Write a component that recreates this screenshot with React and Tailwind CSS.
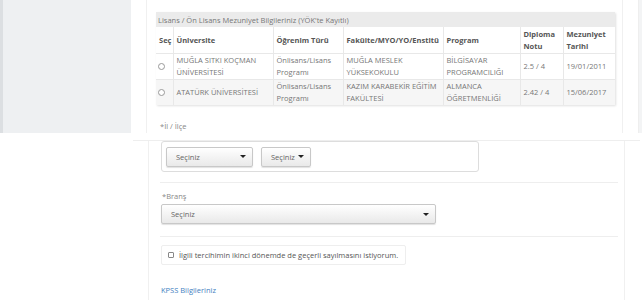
import React from 'react'

const COLS = [
  { label: 'Seç', w: 'w-[17px]' },
  { label: 'Üniversite', w: 'w-[100px]' },
  { label: 'Öğrenim Türü', w: 'w-[70px]' },
  { label: 'Fakülte/MYO/YO/Enstitü', w: 'w-[100px]' },
  { label: 'Program', w: 'w-[77px]' },
  { label: ['Diploma', 'Notu'], w: 'w-[43px]' },
  { label: ['Mezuniyet', 'Tarihi'], w: 'w-[52px]' },
]

const ROWS = [
  {
    uni: ['MUĞLA SITKI KOÇMAN', 'ÜNİVERSİTESİ'],
    tur: ['Önlisans/Lisans', 'Programı'],
    fak: ['MUĞLA MESLEK', 'YÜKSEKOKULU'],
    prog: ['BİLGİSAYAR', 'PROGRAMCILIĞI'],
    not: '2.5 / 4',
    tarih: '19/01/2011',
  },
  {
    uni: ['ATATÜRK ÜNİVERSİTESİ'],
    tur: ['Önlisans/Lisans', 'Programı'],
    fak: ['KAZIM KARABEKİR EĞİTİM', 'FAKÜLTESİ'],
    prog: ['ALMANCA', 'ÖĞRETMENLİĞİ'],
    not: '2.42 / 4',
    tarih: '15/06/2017',
  },
]

const Lines = ({ items }) =>
  (Array.isArray(items) ? items : [items]).map((t, i) => <div key={i}>{t}</div>)

function Select({ className }) {
  return (
    <div className={`flex items-center justify-between h-[20px] pl-[9px] pr-[6px] rounded-[2px] border border-[#c8c8c8] bg-gradient-to-b from-white to-[#e9e9e9] shadow-[0_1px_1px_rgba(0,0,0,0.12)] text-[#666] ${className}`}>
      <span>Seçiniz</span>
      <span className="w-0 h-0 border-l-[3px] border-r-[3px] border-t-[3px] border-l-transparent border-r-transparent border-t-[#222]" />
    </div>
  )
}

export default function App() {
  return (
    <div className="w-[642px] h-[300px] overflow-hidden bg-white font-['Open_Sans',sans-serif] text-[7.5px] leading-[12px] text-[#777]">
      {/* upper window */}
      <div className="flex h-[133px]">
        <div className="w-[3px] bg-[#dcdfe2]" />
        <div className="w-[128px] bg-[#eef0f2]" />
        <div className="w-[15px]" />
        <div className="w-[477px] border-l border-r border-[#f0f0f0] pl-[9px] pr-[7px] pt-[12px]">
          <div className="shadow-[1px_1px_2px_rgba(0,0,0,0.12)]">
            <div className="h-[15px] bg-[#ebebeb] pl-[2px] flex items-center text-[#777]">
              Lisans / Ön Lisans Mezuniyet Bilgileriniz (YÖK'te Kayıtlı)
            </div>
            <table className="border-collapse w-[459px] table-fixed">
              <thead>
                <tr className="h-[26px] bg-white">
                  {COLS.map((c, i) => (
                    <th key={i} className={`${c.w} text-left align-middle font-bold text-[#555] px-[3px] ${i > 0 ? 'border-l border-[#e8e8e8]' : ''}`}>
                      <Lines items={c.label} />
                    </th>
                  ))}
                </tr>
              </thead>
              <tbody>
                {ROWS.map((r, i) => (
                  <tr key={i} className={`h-[26px] border-t border-[#e8e8e8] ${i % 2 ? 'bg-[#f6f6f6]' : 'bg-white'}`}>
                    <td className="px-[2px] align-middle">
                      <div className="w-[7px] h-[7px] rounded-full border border-[#999] bg-white" />
                    </td>
                    <td className="px-[3px] border-l border-[#e8e8e8]"><Lines items={r.uni} /></td>
                    <td className="px-[3px] border-l border-[#e8e8e8]"><Lines items={r.tur} /></td>
                    <td className="px-[3px] border-l border-[#e8e8e8]"><Lines items={r.fak} /></td>
                    <td className="px-[3px] border-l border-[#e8e8e8]"><Lines items={r.prog} /></td>
                    <td className="px-[3px] border-l border-[#e8e8e8]">{r.not}</td>
                    <td className="px-[3px] border-l border-[#e8e8e8]">{r.tarih}</td>
                  </tr>
                ))}
              </tbody>
            </table>
          </div>
          <div className="mt-[15px] pl-[4px] text-[#888]">*İl / İlçe</div>
        </div>
        <div className="w-[16px] border-r border-[#eeeeee]" />
        <div className="flex-1 bg-[#f3f4f5]" />
      </div>

      {/* lower window */}
      <div className="pt-[7px]">
        <div className="ml-[133px] w-[507px] border-t border-[#eeeeee] flex h-[160px]">
          <div className="w-[15px]" />
          <div className="w-[477px] border-l border-r border-[#f0f0f0] pl-[11px] pr-[6px]">
            <div className="w-[318px] h-[31px] ml-[1px] border border-[#dddddd] rounded-[3px] flex items-center gap-[8px] pl-[4px]">
              <Select className="w-[87px]" />
              <Select className="w-[50px]" />
            </div>
            <div className="mt-[10px] border-t border-[#eeeeee]" />
            <div className="mt-[7px] pl-[2px] text-[#888]">*Branş</div>
            <Select className="w-[275px] ml-[1px] mt-[2px]" />
            <div className="mt-[12px] border-t border-[#eeeeee]" />
            <div className="mt-[8px] ml-[1px] w-[245px] h-[20px] border border-[#eeeeee] rounded-[2px] flex items-center pl-[6px] gap-[5px] text-[#555]">
              <div className="w-[6px] h-[6px] border border-[#888] rounded-[1px]" />
              <span>İlgili tercihimin ikinci dönemde de geçerli sayılmasını istiyorum.</span>
            </div>
            <div className="mt-[19px] pl-[1px] text-[#3f7fc1]">KPSS Bilgileriniz</div>
          </div>
        </div>
      </div>
    </div>
  )
}
